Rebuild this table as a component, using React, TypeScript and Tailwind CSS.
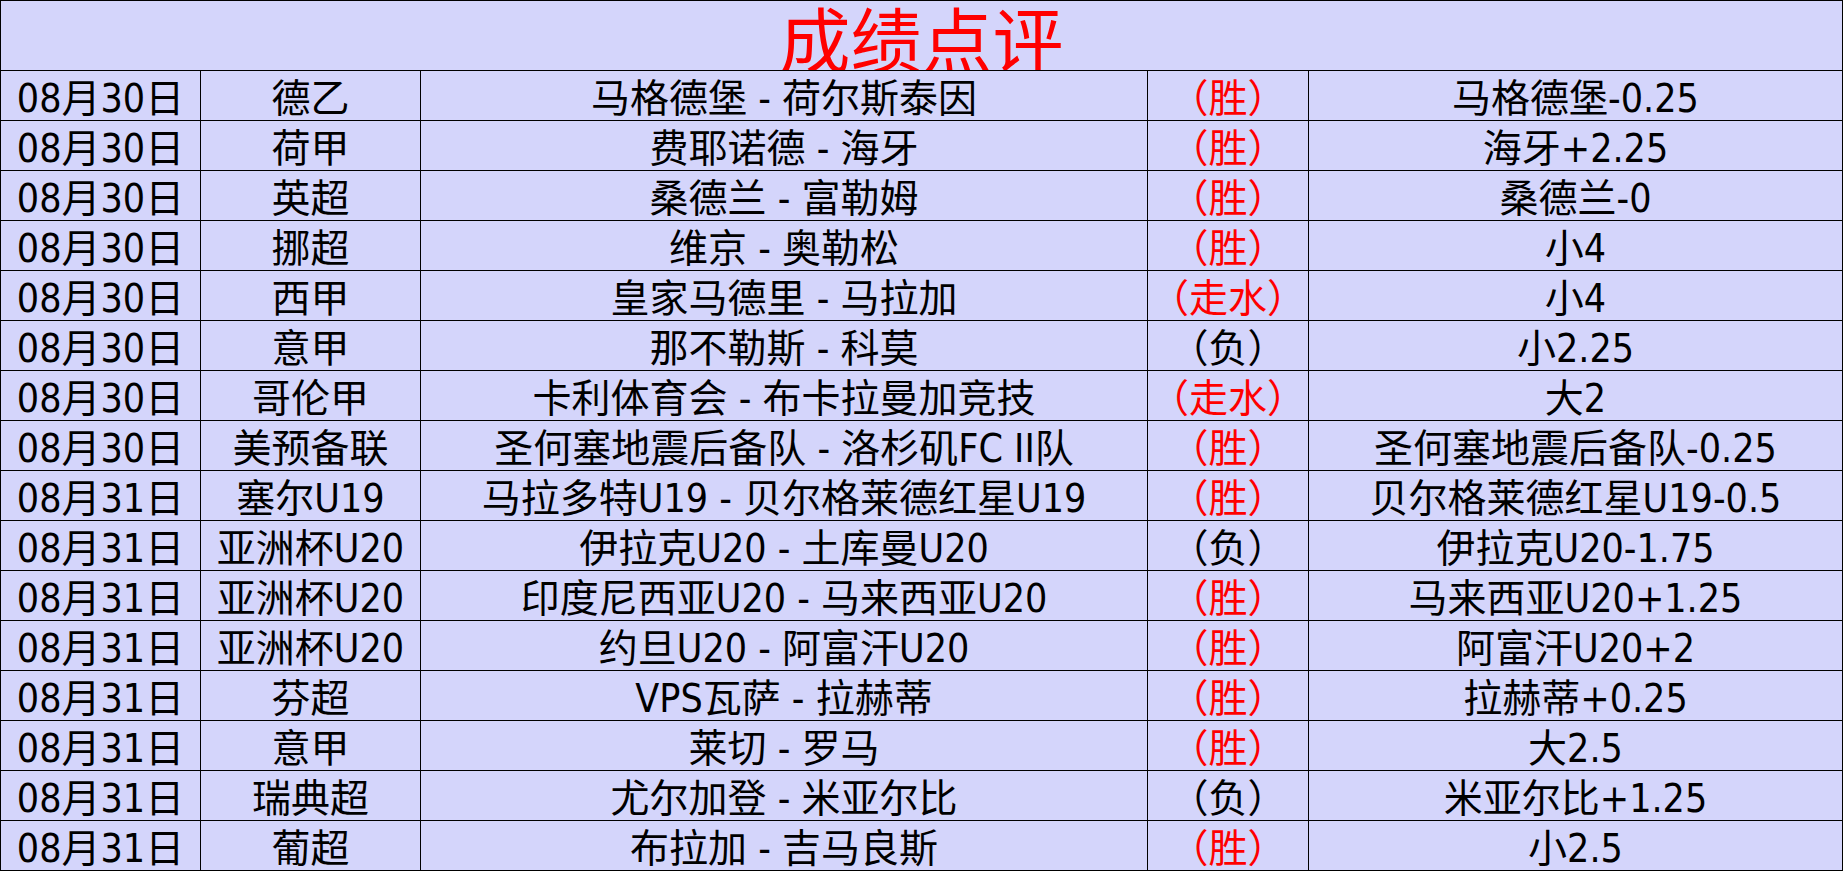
import React from 'react';

interface Row {
  date: string;
  league: string;
  match: string;
  result: string;
  pick: string;
}

const rows: Row[] = [
  { date: '08月30日', league: '德乙', match: '马格德堡 - 荷尔斯泰因', result: '胜', pick: '马格德堡-0.25' },
  { date: '08月30日', league: '荷甲', match: '费耶诺德 - 海牙', result: '胜', pick: '海牙+2.25' },
  { date: '08月30日', league: '英超', match: '桑德兰 - 富勒姆', result: '胜', pick: '桑德兰-0' },
  { date: '08月30日', league: '挪超', match: '维京 - 奥勒松', result: '胜', pick: '小4' },
  { date: '08月30日', league: '西甲', match: '皇家马德里 - 马拉加', result: '走水', pick: '小4' },
  { date: '08月30日', league: '意甲', match: '那不勒斯 - 科莫', result: '负', pick: '小2.25' },
  { date: '08月30日', league: '哥伦甲', match: '卡利体育会 - 布卡拉曼加竞技', result: '走水', pick: '大2' },
  { date: '08月30日', league: '美预备联', match: '圣何塞地震后备队 - 洛杉矶FC II队', result: '胜', pick: '圣何塞地震后备队-0.25' },
  { date: '08月31日', league: '塞尔U19', match: '马拉多特U19 - 贝尔格莱德红星U19', result: '胜', pick: '贝尔格莱德红星U19-0.5' },
  { date: '08月31日', league: '亚洲杯U20', match: '伊拉克U20 - 土库曼U20', result: '负', pick: '伊拉克U20-1.75' },
  { date: '08月31日', league: '亚洲杯U20', match: '印度尼西亚U20 - 马来西亚U20', result: '胜', pick: '马来西亚U20+1.25' },
  { date: '08月31日', league: '亚洲杯U20', match: '约旦U20 - 阿富汗U20', result: '胜', pick: '阿富汗U20+2' },
  { date: '08月31日', league: '芬超', match: 'VPS瓦萨 - 拉赫蒂', result: '胜', pick: '拉赫蒂+0.25' },
  { date: '08月31日', league: '意甲', match: '莱切 - 罗马', result: '胜', pick: '大2.5' },
  { date: '08月31日', league: '瑞典超', match: '尤尔加登 - 米亚尔比', result: '负', pick: '米亚尔比+1.25' },
  { date: '08月31日', league: '葡超', match: '布拉加 - 吉马良斯', result: '胜', pick: '小2.5' },
];

const cell = 'h-[50px] flex items-center justify-center border-r border-b border-black whitespace-nowrap pt-[6px]';

export default function App() {
  return (
    <div className="w-[1844px] h-[872px] bg-white overflow-hidden">
      <div
        className="w-[1843px] grid grid-cols-[200px_220px_727px_161px_534px] border-l border-t border-black bg-[#d4d5fb] text-black text-[39px] leading-none"
        style={{ fontFamily: '"Liberation Sans Narrow", "DejaVu Sans Condensed", "Noto Sans CJK SC", sans-serif' }}
      >
        {/* Title */}
        <div className="col-span-5 h-[70px] flex items-center justify-center border-r border-b border-black overflow-hidden">
          <span className="text-[71px] leading-[68px] text-[#ff0000]" style={{ fontFamily: '"Noto Sans CJK SC", sans-serif' }}>
            成绩点评
          </span>
        </div>

        {rows.map((r, i) => (
          <React.Fragment key={i}>
            <div className={cell}>{r.date}</div>
            <div className={cell}>{r.league}</div>
            <div className={cell}>{r.match}</div>
            <div className={`${cell} ${r.result === '负' ? 'text-black' : 'text-[#ff0000]'}`}>（{r.result}）</div>
            <div className={cell}>{r.pick}</div>
          </React.Fragment>
        ))}
      </div>
    </div>
  );
}
